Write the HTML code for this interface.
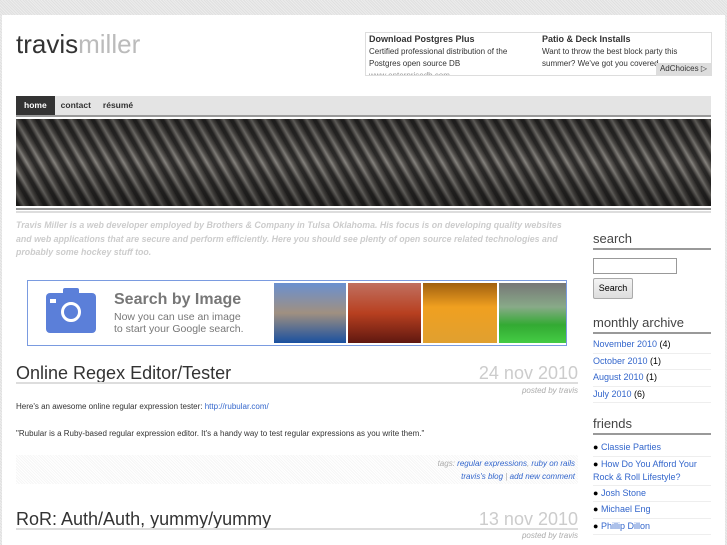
<!DOCTYPE html>
<html><head><style>
body{margin:0;width:727px;height:545px;overflow:hidden;background:#e4e4e4 repeating-linear-gradient(45deg,#ececec 0 1px,#e0e0e0 1px 2px);font-family:"Liberation Sans",sans-serif;}
#page{position:absolute;left:2px;top:15px;width:723px;height:530px;background:#fff;}
.a{position:absolute;}
a{color:#3366cc;text-decoration:none}
.side h3{font-weight:normal;font-size:13px;color:#444;margin:0;padding-bottom:2px;border-bottom:2px solid #999;}
.side li{font-size:9px;line-height:15.5px;border-bottom:1px solid #eee;list-style:none;}
</style></head><body>
<div id="page">
<div class="a" style="left:14px;top:14px;font-size:26px;color:#333;letter-spacing:0px">travis<span style="color:#bbb">miller</span></div>
<div class="a" style="left:363px;top:17px;width:345px;height:42px;border:1px solid #ddd;font-size:8px;line-height:12px;color:#333;overflow:hidden">
 <div class="a" style="left:3px;top:0"><b style="font-size:9px">Download Postgres Plus</b><br>Certified professional distribution of the<br>Postgres open source DB<br><span style="color:#999">www.enterprisedb.com</span></div>
 <div class="a" style="left:176px;top:0"><b style="font-size:9px">Patio &amp; Deck Installs</b><br>Want to throw the best block party this<br>summer? We've got you covered.</div>
 <div class="a" style="right:0;top:30px;background:#ddd;padding:0 4px;font-size:8px;line-height:12px">AdChoices ▷</div>
</div>
<div class="a" style="left:14px;top:81px;width:695px;height:19px;background:#e4e4e4;border-bottom:2px solid #999;font-size:8.5px;font-weight:bold;color:#333;line-height:19px">
 <span style="background:#333;color:#fff;padding:0 8px;display:inline-block">home</span><span style="padding:0 6px">contact</span><span style="padding:0 6px">résumé</span>
</div>
<div class="a" style="left:14px;top:104px;width:695px;height:87px;background:repeating-linear-gradient(60deg,#4a4846 0 3px,#9a958f 5px,#e0dcd4 7px,#9a958e 9px,#5a5653 12px),linear-gradient(#666,#999 50%,#555);background-blend-mode:multiply"></div>
<div class="a" style="left:14px;top:193px;width:695px;height:2px;background:#999"></div>
<div class="a" style="left:14px;top:196px;width:695px;height:2px;background:#ddd"></div>
<div class="a" style="left:14px;top:204px;width:560px;font-size:8.8px;line-height:13.5px;font-style:italic;font-weight:bold;color:#ccc">Travis Miller is a web developer employed by Brothers &amp; Company in Tulsa Oklahoma. His focus is on developing quality websites and web applications that are secure and perform efficiently. Here you should see plenty of open source related technologies and probably some hockey stuff too.</div>
<div class="a" style="left:25px;top:265px;width:538px;height:64px;border:1px solid #7a9be0;overflow:hidden">
 <div class="a" style="left:18px;top:12px;width:50px;height:40px;background:#5b7fd9;border-radius:4px"></div>
 <div class="a" style="left:35px;top:7px;width:16px;height:6px;background:#5b7fd9;border-radius:2px 2px 0 0"></div>
 <div class="a" style="left:33px;top:21px;width:14px;height:14px;border:3px solid #fff;border-radius:50%"></div>
 <div class="a" style="left:22px;top:18px;width:6px;height:4px;background:#fff"></div>
 <div class="a" style="left:86px;top:10px;font-size:16px;font-weight:bold;color:#777">Search by Image</div>
 <div class="a" style="left:86px;top:30px;font-size:10.5px;line-height:12px;color:#777">Now you can use an image<br>to start your Google search.</div>
 <div class="a" style="left:246px;top:2px;width:72px;height:60px;background:linear-gradient(#6a90d0,#a09080 50%,#1a50a0)"></div>
 <div class="a" style="left:320px;top:2px;width:73px;height:60px;background:linear-gradient(#c07060,#b84020 50%,#601810)"></div>
 <div class="a" style="left:395px;top:2px;width:74px;height:60px;background:linear-gradient(#a06010,#f0a020 40%,#e0a030)"></div>
 <div class="a" style="left:471px;top:2px;width:67px;height:60px;background:linear-gradient(#777,#8a8 40%,#3a3 70%,#4c4)"></div>
</div>
<div class="a" style="left:14px;top:348px;font-size:18px;color:#333">Online Regex Editor/Tester</div>
<div class="a" style="left:470px;top:348px;width:106px;text-align:right;font-size:18px;color:#ccc">24 nov 2010</div>
<div class="a" style="left:14px;top:367px;width:562px;height:2px;background:#ddd"></div>
<div class="a" style="left:400px;top:371px;width:176px;text-align:right;font-size:8px;font-style:italic;color:#aaa">posted by travis</div>
<div class="a" style="left:14px;top:387px;font-size:8px;color:#333">Here's an awesome online regular expression tester: <a>http://rubular.com/</a></div>
<div class="a" style="left:14px;top:414px;font-size:8px;color:#333">"Rubular is a Ruby-based regular expression editor. It's a handy way to test regular expressions as you write them."</div>
<div class="a" style="left:14px;top:440px;width:562px;height:29px;background:repeating-linear-gradient(45deg,#f6f6f6 0 1px,#fff 1px 2px);text-align:right;font-size:8px;font-style:italic;line-height:13px;color:#aaa"><div style="padding:2px 3px">tags: <a>regular expressions</a>, <a>ruby on rails</a><br><a>travis's blog</a> | <a>add new comment</a></div></div>
<div class="a" style="left:14px;top:494px;font-size:18px;color:#333">RoR: Auth/Auth, yummy/yummy</div>
<div class="a" style="left:470px;top:494px;width:106px;text-align:right;font-size:18px;color:#ccc">13 nov 2010</div>
<div class="a" style="left:14px;top:513px;width:562px;height:2px;background:#ddd"></div>
<div class="a" style="left:400px;top:516px;width:176px;text-align:right;font-size:8px;font-style:italic;color:#aaa">posted by travis</div>
<div class="a side" style="left:591px;top:216px;width:118px">
 <h3>search</h3>
 <div style="margin-top:8px;width:82px;height:14px;border:1px solid #999"></div>
 <div style="margin-top:4px;width:38px;height:19px;border:1px solid #aaa;border-radius:2px;background:linear-gradient(#f4f4f4,#ddd);font-size:9px;line-height:19px;text-align:center">Search</div>
 <h3 style="margin-top:16px">monthly archive</h3>
 <ul style="margin:3px 0 0;padding:0"><li><a>November 2010</a> (4)</li><li><a>October 2010</a> (1)</li><li><a>August 2010</a> (1)</li><li><a>July 2010</a> (6)</li></ul>
 <h3 style="margin-top:13px">friends</h3>
 <ul style="margin:5px 0 0;padding:0"><li>● <a>Classie Parties</a></li><li style="line-height:13px;padding:1px 0">● <a>How Do You Afford Your Rock &amp; Roll Lifestyle?</a></li><li>● <a>Josh Stone</a></li><li>● <a>Michael Eng</a></li><li>● <a>Phillip Dillon</a></li></ul>
</div>
</div>
</body></html>
